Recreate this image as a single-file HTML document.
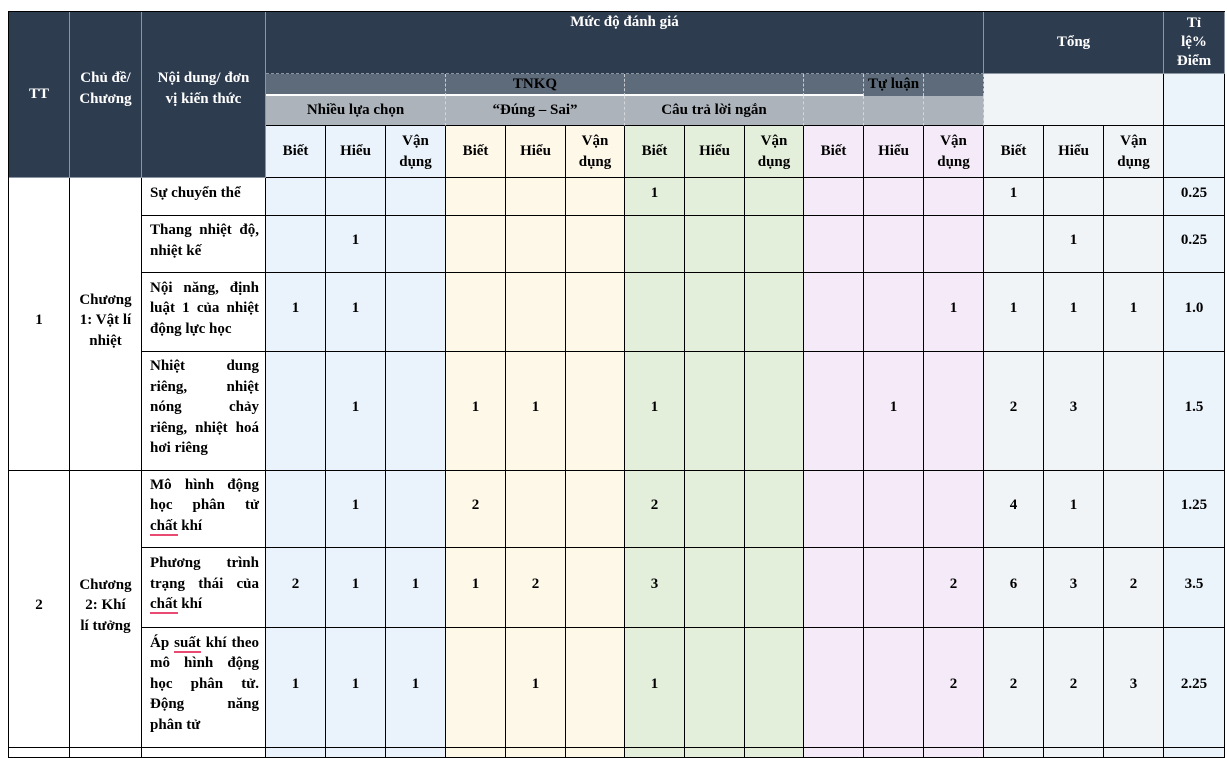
<!DOCTYPE html>
<html><head><meta charset="utf-8">
<style>
*{box-sizing:border-box;margin:0;padding:0}
body{width:1227px;height:752px;background:#fff;overflow:hidden;font-family:"Liberation Serif","Noto Serif CJK SC",serif;font-weight:bold;font-size:15px;color:#000}
.g{position:absolute;left:8px;top:11px;display:grid;
grid-template-columns:61px 72px 124px 60px 60px 60px 60px 60px 59px 60px 60px 59px 60px 60px 60px 60px 60px 60px 61px;
grid-template-rows:62px 22px 30px 52px 38px 57px 79px 119px 77px 80px 120px 10px;
border-left:1px solid #000;border-top:1px solid #000}
.g>div{border-right:1px solid #000;border-bottom:1px solid #000;display:flex;align-items:center;justify-content:center;text-align:center;line-height:20.5px}
.g>div.dt{padding-bottom:7px}
.d{background:#2e3c50;color:#fff;border-color:#8c96a2 !important}
.s{background:#5e6b7a;color:#000;border-right:1px dashed #c8ccd2 !important;border-bottom:2px solid #fff !important}
.h{background:#adb3bb;border-right:1px dashed #d4d7db !important;border-bottom:1px solid #000 !important}
.b{background:#eaf3fb}.y{background:#fef8e8}.gr{background:#e3efdb}.p{background:#f5eaf7}.t{background:#f1f4f6}.r{background:#ebf3fb}
.w{background:#fff}
.x{justify-content:flex-start !important;text-align:left !important;padding:0 6px 0 8px}
.x>span{display:block;width:100%;white-space:nowrap}
.j{display:block;text-align:justify;text-align-last:justify;white-space:normal}
u{text-decoration:none;border-bottom:2px solid #e94a72}
</style></head><body>
<div class="g">
<div class="d" style="grid-column:1;grid-row:1/5">TT</div>
<div class="d" style="grid-column:2;grid-row:1/5;padding-bottom:12px">Chủ đề/<br>Chương</div>
<div class="d" style="grid-column:3;grid-row:1/5;padding-bottom:12px">Nội dung/ đơn<br>vị kiến thức</div>
<div class="d" style="grid-column:4/16;grid-row:1;align-items:flex-start;padding-top:0px;border-bottom:1px dashed #8c96a2 !important">Mức độ đánh giá</div>
<div class="d" style="grid-column:16/19;grid-row:1">Tổng</div>
<div class="d" style="grid-column:19;grid-row:1;line-height:19px">Tỉ<br>lệ%<br>Điểm</div>
<div class="s" style="grid-column:4/7;grid-row:2"></div>
<div class="s" style="grid-column:7/10;grid-row:2">TNKQ</div>
<div class="s" style="grid-column:10/13;grid-row:2"></div>
<div class="s" style="grid-column:13;grid-row:2"></div>
<div class="s" style="grid-column:14;grid-row:2;align-items:flex-start;border-bottom:none !important">Tự luận</div>
<div class="s" style="grid-column:15;grid-row:2;border-bottom:none !important"></div>
<div class="t" style="grid-column:16/19;grid-row:2/4"></div>
<div class="r" style="grid-column:19;grid-row:2/4"></div>
<div class="h" style="grid-column:4/7;grid-row:3">Nhiều lựa chọn</div>
<div class="h" style="grid-column:7/10;grid-row:3">“Đúng – Sai”</div>
<div class="h" style="grid-column:10/13;grid-row:3">Câu trả lời ngắn</div>
<div class="h" style="grid-column:13;grid-row:3"></div>
<div class="h" style="grid-column:14;grid-row:3"></div>
<div class="h" style="grid-column:15;grid-row:3"></div>
<div class="b" style="grid-column:4;grid-row:4">Biết</div>
<div class="b" style="grid-column:5;grid-row:4">Hiểu</div>
<div class="b" style="grid-column:6;grid-row:4">Vận<br>dụng</div>
<div class="y" style="grid-column:7;grid-row:4">Biết</div>
<div class="y" style="grid-column:8;grid-row:4">Hiểu</div>
<div class="y" style="grid-column:9;grid-row:4">Vận<br>dụng</div>
<div class="gr" style="grid-column:10;grid-row:4">Biết</div>
<div class="gr" style="grid-column:11;grid-row:4">Hiểu</div>
<div class="gr" style="grid-column:12;grid-row:4">Vận<br>dụng</div>
<div class="p" style="grid-column:13;grid-row:4">Biết</div>
<div class="p" style="grid-column:14;grid-row:4">Hiểu</div>
<div class="p" style="grid-column:15;grid-row:4">Vận<br>dụng</div>
<div class="t" style="grid-column:16;grid-row:4">Biết</div>
<div class="t" style="grid-column:17;grid-row:4">Hiểu</div>
<div class="t" style="grid-column:18;grid-row:4">Vận<br>dụng</div>
<div class="r" style="grid-column:19;grid-row:4"></div>
<div class="w dt" style="grid-column:1;grid-row:5/9">1</div>
<div class="w dt" style="grid-column:2;grid-row:5/9">Chương<br>1: Vật lí<br>nhiệt</div>
<div class="w dt" style="grid-column:1;grid-row:9/12">2</div>
<div class="w dt" style="grid-column:2;grid-row:9/12">Chương<br>2: Khí<br>lí tưởng</div>
<!-- row 5 -->
<div class="w x dt" style="grid-column:3;grid-row:5"><span>Sự chuyển thể</span></div>
<div class="b dt"></div><div class="b dt"></div><div class="b dt"></div>
<div class="y dt"></div><div class="y dt"></div><div class="y dt"></div>
<div class="gr dt">1</div><div class="gr dt"></div><div class="gr dt"></div>
<div class="p dt"></div><div class="p dt"></div><div class="p dt"></div>
<div class="t dt">1</div><div class="t dt"></div><div class="t dt"></div><div class="r dt">0.25</div>
<!-- row 6 -->
<div class="w x dt" style="grid-column:3;grid-row:6"><span><span class="j">Thang nhiệt độ,</span>nhiệt kế</span></div>
<div class="b dt"></div><div class="b dt">1</div><div class="b dt"></div>
<div class="y dt"></div><div class="y dt"></div><div class="y dt"></div>
<div class="gr dt"></div><div class="gr dt"></div><div class="gr dt"></div>
<div class="p dt"></div><div class="p dt"></div><div class="p dt"></div>
<div class="t dt"></div><div class="t dt">1</div><div class="t dt"></div><div class="r dt">0.25</div>
<!-- row 7 -->
<div class="w x dt" style="grid-column:3;grid-row:7"><span><span class="j">Nội năng, định</span><span class="j">luật 1 của nhiệt</span>động lực học</span></div>
<div class="b dt">1</div><div class="b dt">1</div><div class="b dt"></div>
<div class="y dt"></div><div class="y dt"></div><div class="y dt"></div>
<div class="gr dt"></div><div class="gr dt"></div><div class="gr dt"></div>
<div class="p dt"></div><div class="p dt"></div><div class="p dt">1</div>
<div class="t dt">1</div><div class="t dt">1</div><div class="t dt">1</div><div class="r dt">1.0</div>
<!-- row 8 -->
<div class="w x dt" style="grid-column:3;grid-row:8"><span><span class="j">Nhiệt dung</span><span class="j">riêng, nhiệt</span><span class="j">nóng chảy</span><span class="j">riêng, nhiệt hoá</span>hơi riêng</span></div>
<div class="b dt"></div><div class="b dt">1</div><div class="b dt"></div>
<div class="y dt">1</div><div class="y dt">1</div><div class="y dt"></div>
<div class="gr dt">1</div><div class="gr dt"></div><div class="gr dt"></div>
<div class="p dt"></div><div class="p dt">1</div><div class="p dt"></div>
<div class="t dt">2</div><div class="t dt">3</div><div class="t dt"></div><div class="r dt">1.5</div>
<!-- row 9 -->
<div class="w x dt" style="grid-column:3;grid-row:9"><span><span class="j">Mô hình động</span><span class="j">học phân tử</span><u>chất</u> khí</span></div>
<div class="b dt"></div><div class="b dt">1</div><div class="b dt"></div>
<div class="y dt">2</div><div class="y dt"></div><div class="y dt"></div>
<div class="gr dt">2</div><div class="gr dt"></div><div class="gr dt"></div>
<div class="p dt"></div><div class="p dt"></div><div class="p dt"></div>
<div class="t dt">4</div><div class="t dt">1</div><div class="t dt"></div><div class="r dt">1.25</div>
<!-- row 10 -->
<div class="w x dt" style="grid-column:3;grid-row:10"><span><span class="j">Phương trình</span><span class="j">trạng thái của</span><u>chất</u> khí</span></div>
<div class="b dt">2</div><div class="b dt">1</div><div class="b dt">1</div>
<div class="y dt">1</div><div class="y dt">2</div><div class="y dt"></div>
<div class="gr dt">3</div><div class="gr dt"></div><div class="gr dt"></div>
<div class="p dt"></div><div class="p dt"></div><div class="p dt">2</div>
<div class="t dt">6</div><div class="t dt">3</div><div class="t dt">2</div><div class="r dt">3.5</div>
<!-- row 11 -->
<div class="w x dt" style="grid-column:3;grid-row:11"><span><span class="j">Áp <u>suất</u> khí theo</span><span class="j">mô hình động</span><span class="j">học phân tử.</span><span class="j">Động năng</span>phân tử</span></div>
<div class="b dt">1</div><div class="b dt">1</div><div class="b dt">1</div>
<div class="y dt"></div><div class="y dt">1</div><div class="y dt"></div>
<div class="gr dt">1</div><div class="gr dt"></div><div class="gr dt"></div>
<div class="p dt"></div><div class="p dt"></div><div class="p dt">2</div>
<div class="t dt">2</div><div class="t dt">2</div><div class="t dt">3</div><div class="r dt">2.25</div>
<!-- row 12 -->
<div class="w"></div><div class="w"></div><div class="w"></div>
<div class="b"></div><div class="b"></div><div class="b"></div>
<div class="y"></div><div class="y"></div><div class="y"></div>
<div class="gr"></div><div class="gr"></div><div class="gr"></div>
<div class="p"></div><div class="p"></div><div class="p"></div>
<div class="t"></div><div class="t"></div><div class="t"></div><div class="r"></div>
</div>
</body></html>
